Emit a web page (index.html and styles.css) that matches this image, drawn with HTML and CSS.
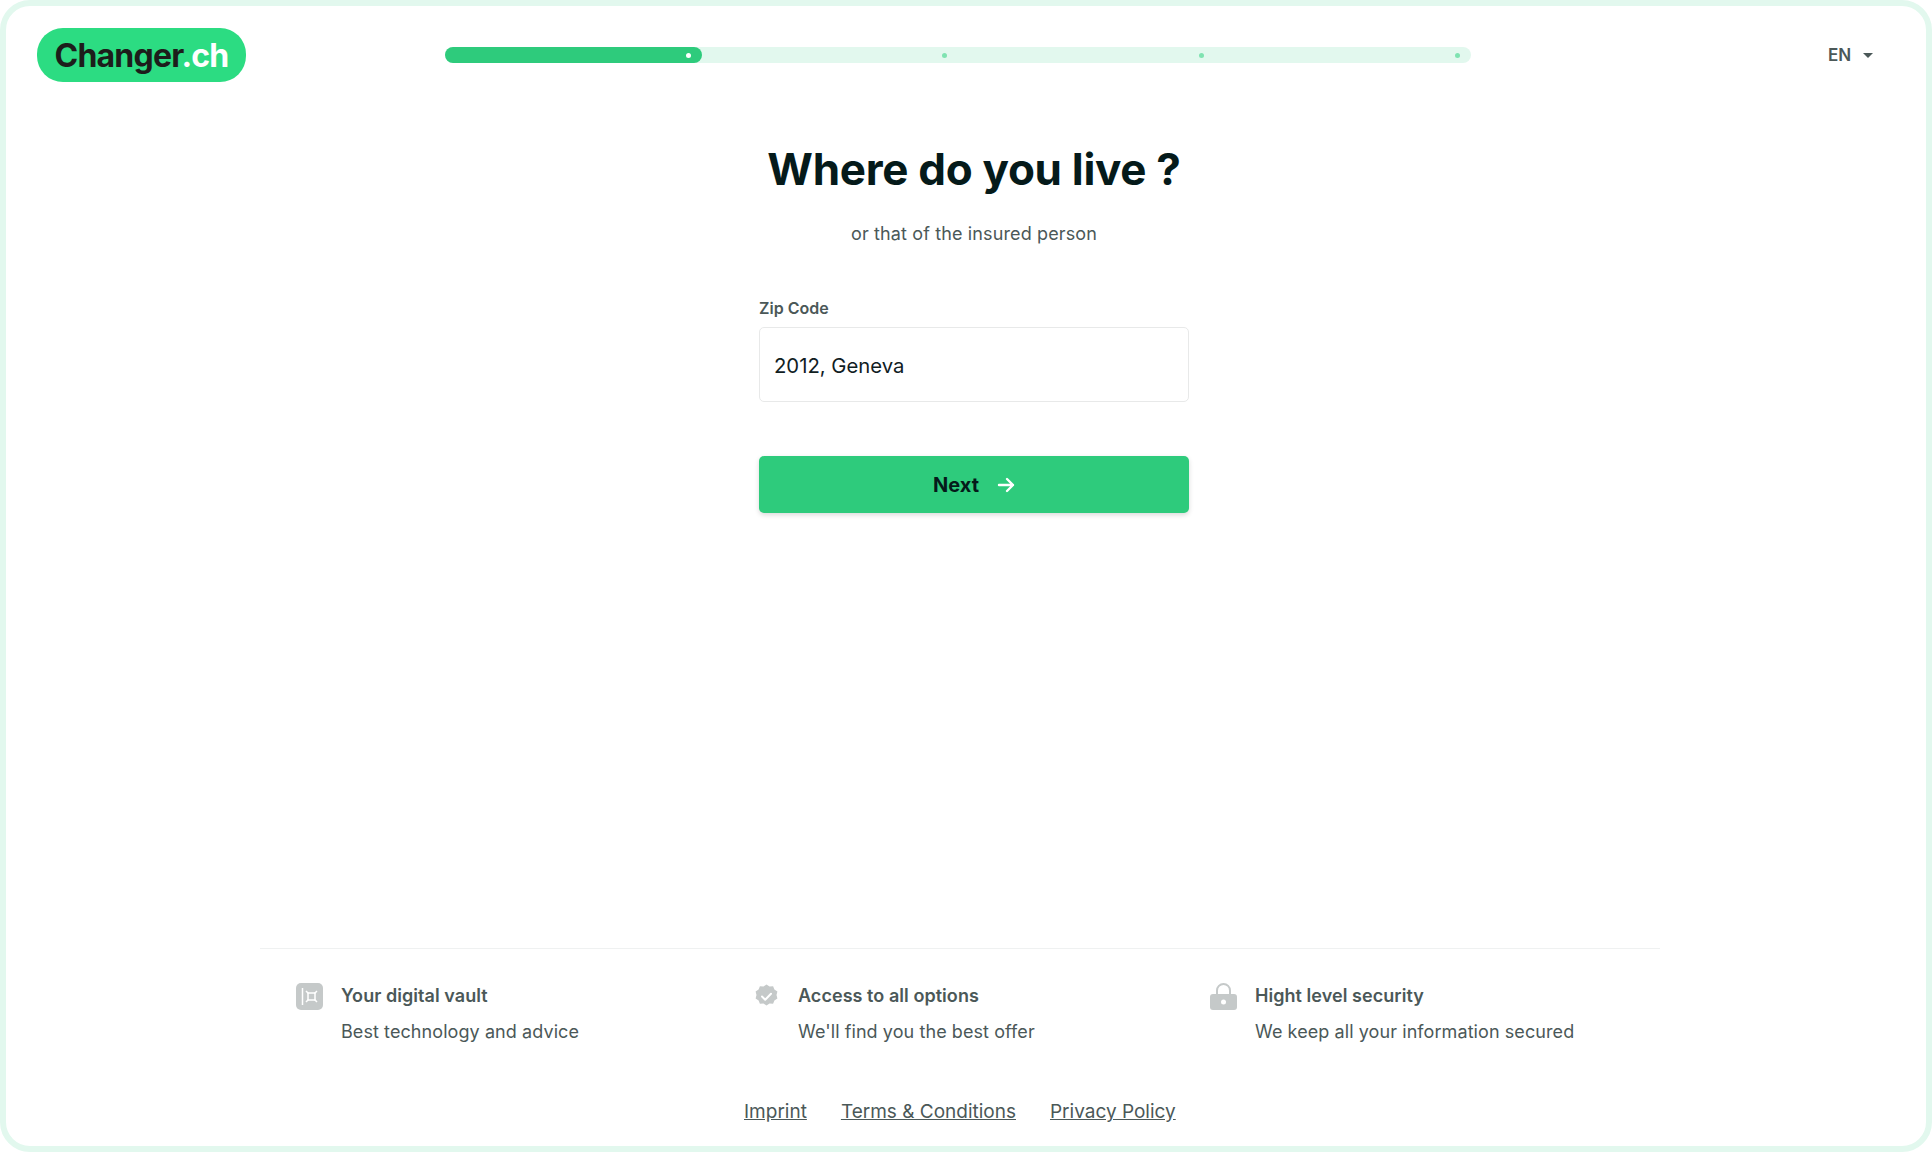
FILE: index.html
```html
<!DOCTYPE html>
<html>
<head>
  <title>Changer.ch</title>
  <link rel="stylesheet" href="styles.css">
</head>
<body>
  <div class="frame">
    <header class="header">
      <div class="logo">Changer<span class="logo-dot">.ch</span></div>
      <div class="progress">
        <div class="step done"><span class="dot"></span></div>
        <div class="step"><span class="dot"></span></div>
        <div class="step"><span class="dot"></span></div>
        <div class="step"><span class="dot"></span></div>
      </div>
      <div class="lang">EN <span class="caret"></span></div>
    </header>

    <main class="main">
      <h1>Where do you live ?</h1>
      <p class="sub">or that of the insured person</p>
      <label class="label" for="zip">Zip Code</label>
      <input class="input" id="zip" type="text" value="2012, Geneva">
      <button class="next">
        Next
        <svg width="18" height="16" viewBox="0 0 18 16" fill="none" stroke="#fff" stroke-width="2.400" stroke-linecap="round" stroke-linejoin="round">
          <path d="M2 8h14M10 2l6 6-6 6"/>
        </svg>
      </button>
    </main>

    <footer class="footer">
      <div class="features">
        <div class="feature">
          <svg class="icon" width="27" height="27" viewBox="0 0 27 27">
            <rect width="27" height="27" rx="5" fill="#c5c9c9"/>
            <path d="M6.500 5v17" stroke="#fff" stroke-width="1.500"/>
            <rect x="12" y="10" width="7" height="7" fill="none" stroke="#fff" stroke-width="1.500"/>
            <path d="M10 8l2.500 2.500M21 8l-2.500 2.500M10 19l2.500-2.500M21 19l-2.500-2.500" stroke="#fff" stroke-width="1.500"/>
          </svg>
          <div>
            <div class="feature-title">Your digital vault</div>
            <div class="feature-text">Best technology and advice</div>
          </div>
        </div>
        <div class="feature">
          <svg class="icon" width="27" height="27" viewBox="0 0 27 27">
            <path d="M13.500 1.500l3 2 3.600-.3 1.300 3.300 3 2-.9 3.500.9 3.500-3 2-1.300 3.300-3.600-.3-3 2-3-2-3.600.3-1.300-3.300-3-2 .9-3.500-.9-3.500 3-2 1.300-3.300 3.600.3z" fill="#c5c9c9"/>
            <path d="M9 13.500l3.200 3.200 5.800-6" fill="none" stroke="#fff" stroke-width="2" stroke-linecap="round" stroke-linejoin="round"/>
          </svg>
          <div>
            <div class="feature-title">Access to all options</div>
            <div class="feature-text">We'll find you the best offer</div>
          </div>
        </div>
        <div class="feature">
          <svg class="icon" width="27" height="27" viewBox="0 0 27 27">
            <path d="M7 12V7.500a6.500 6.500 0 0 1 13 0V12" fill="none" stroke="#c5c9c9" stroke-width="2"/>
            <rect y="11" width="27" height="16" rx="3" fill="#c5c9c9"/>
            <circle cx="13.500" cy="19" r="2.500" fill="#fff"/>
          </svg>
          <div>
            <div class="feature-title">Hight level security</div>
            <div class="feature-text">We keep all your information secured</div>
          </div>
        </div>
      </div>
      <nav class="links">
        <a href="#">Imprint</a>
        <a href="#">Terms &amp; Conditions</a>
        <a href="#">Privacy Policy</a>
      </nav>
    </footer>
  </div>
</body>
</html>
```

FILE: styles.css
```css
html, body {
  margin: 0;
  height: 100%;
  background: #fff;
}
body {
  font-family: Inter, "Liberation Sans", sans-serif;
  color: #4b5858;
}
.frame {
  box-sizing: border-box;
  height: 100vh;
  border: 6px solid #e2f8ee;
  border-radius: 30px;
  display: flex;
  flex-direction: column;
}
.header {
  display: flex;
  align-items: center;
  padding: 22px 0 0 31px;
}
.logo {
  width: 209px;
  height: 54px;
  border-radius: 26px;
  background: #2cdc82;
  color: #1d1d1b;
  font-size: 32px;
  font-weight: 700;
  letter-spacing: -0.8px;
  line-height: 56px;
  text-align: center;
}
.logo-dot {
  color: #fff;
}
.progress {
  display: flex;
  width: 1026px;
  height: 16px;
  margin-left: 199px;
  border-radius: 8px;
  background: #e2f8ee;
}
.step {
  flex: 1;
  display: flex;
  align-items: center;
  justify-content: flex-end;
  padding-right: 11px;
}
.step.done {
  background: #2ecb7c;
  border-radius: 8px;
}
.dot {
  width: 5px;
  height: 5px;
  border-radius: 50%;
  background: #7fe3b1;
}
.done .dot {
  background: #fff;
}
.lang {
  display: flex;
  align-items: center;
  margin-left: 357px;
  font-size: 17px;
  font-weight: 600;
}
.caret {
  margin-left: 12px;
  border: 5.500px solid transparent;
  border-top-color: #4b5858;
  border-bottom: 0;
}
.main {
  flex: 1;
  width: 430px;
  margin-left: 753px;
  display: flex;
  flex-direction: column;
}
h1 {
  margin: 60px -40px 0;
  font-size: 44px;
  line-height: 54px;
  font-weight: 700;
  letter-spacing: -0.3px;
  text-align: center;
  white-space: nowrap;
  color: #051a1a;
}
.sub {
  margin: 24px 0 0;
  font-size: 18px;
  letter-spacing: 0.13px;
  line-height: 28px;
  text-align: center;
}
.label {
  margin: 50px 0 9px;
  font-size: 16px;
  line-height: 20px;
  font-weight: 600;
}
.input {
  box-sizing: border-box;
  height: 75px;
  padding: 2px 14px 0;
  border: 1.500px solid #e8e9e9;
  border-radius: 5px;
  font-family: inherit;
  font-size: 20.300px;
  color: #10201f;
  outline: none;
}
.next {
  display: flex;
  align-items: center;
  justify-content: center;
  gap: 18px;
  height: 57px;
  margin-top: 54px;
  border: none;
  border-radius: 5px;
  background: #2ecb7c;
  box-shadow: 0 2px 5px rgba(0,0,0,0.15);
  font-family: inherit;
  font-size: 20px;
  font-weight: 700;
  color: #051a1a;
  cursor: pointer;
}
.footer {
  width: 1400px;
  margin-left: 254px;
  padding-bottom: 22px;
  border-top: 1px solid #eff1f1;
}
.features {
  display: grid;
  grid-template-columns: repeat(3, 457px);
  padding: 34px 0 0 36px;
}
.feature {
  display: flex;
  gap: 18px;
}
.icon {
  flex: none;
}
.feature-title {
  font-size: 18px;
  letter-spacing: 0.05px;
  line-height: 26px;
  font-weight: 600;
  margin-bottom: 10px;
}
.feature-text {
  font-size: 18px;
  letter-spacing: 0.08px;
  line-height: 26px;
}
.links {
  display: flex;
  gap: 34px;
  margin: 55px 0 0 484px;
  font-size: 19px;
  line-height: 24px;
}
.links a {
  color: #4b5858;
}
```
